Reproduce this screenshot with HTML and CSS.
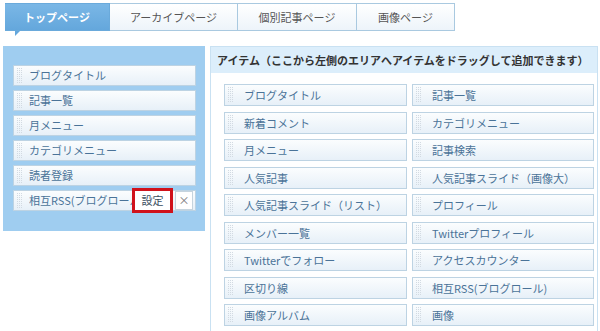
FILE: index.html
```html
<!DOCTYPE html>
<html lang="ja">
<head>
<meta charset="utf-8">
<link rel="stylesheet" href="styles.css">
</head>
<body>
<div class="tabs">
  <div class="tab active t1">トップページ<span class="tail"></span></div>
  <div class="tab t2">アーカイブページ</div>
  <div class="tab t3">個別記事ページ</div>
  <div class="tab t4">画像ページ</div>
</div>
<div class="main">
  <div class="left">
    <div class="item">ブログタイトル</div>
    <div class="item">記事一覧</div>
    <div class="item">月メニュー</div>
    <div class="item">カテゴリメニュー</div>
    <div class="item">読者登録</div>
    <div class="item last">
      <span class="clip">相互RSS(ブログロール)</span>
      <span class="setbox"><span class="setbtn">設定</span></span>
      <span class="close">×</span>
    </div>
  </div>
  <div class="right">
    <div class="head">アイテム（ここから左側のエリアへアイテムをドラッグして追加できます）</div>
    <div class="grid">
      <div class="item">ブログタイトル</div>
      <div class="item">記事一覧</div>
      <div class="item">新着コメント</div>
      <div class="item">カテゴリメニュー</div>
      <div class="item">月メニュー</div>
      <div class="item">記事検索</div>
      <div class="item">人気記事</div>
      <div class="item">人気記事スライド（画像大）</div>
      <div class="item">人気記事スライド（リスト）</div>
      <div class="item">プロフィール</div>
      <div class="item">メンバー一覧</div>
      <div class="item">Twitterプロフィール</div>
      <div class="item">Twitterでフォロー</div>
      <div class="item">アクセスカウンター</div>
      <div class="item">区切り線</div>
      <div class="item">相互RSS(ブログロール)</div>
      <div class="item">画像アルバム</div>
      <div class="item">画像</div>
    </div>
  </div>
</div>
</body>
</html>
```
FILE: styles.css
```css
* { box-sizing: border-box; }
html, body { margin: 0; padding: 0; background: #fff; overflow: hidden; }
body {
  font-family: "Noto Sans CJK JP", "Liberation Sans", sans-serif;
  font-size: 11px;
  color: #333;
  width: 600px;
  height: 331px;
}
.tabs {
  display: flex;
  margin: 3px 0 0 5px;
  height: 28px;
}
.tab {
  position: relative;
  height: 28px;
  line-height: 26px;
  text-align: center;
  color: #555;
  font-size: 11px;
  border: 1px solid #a9c9e0;
  border-left: none;
  background: linear-gradient(#ffffff, #edf4fa);
}
.t1 { width: 105px; }
.t2 { width: 128px; }
.t3 { width: 119px; }
.t4 { width: 98px; }
.tab.active {
  background: linear-gradient(#7ab7e6, #64a7dc);
  border-color: #6aaadb;
  color: #fff;
  font-weight: bold;
}
.tail {
  position: absolute;
  left: 10px;
  top: 27px;
  width: 0;
  height: 0;
  border-top: 5px solid #64a7dc;
  border-right: 5px solid transparent;
}
.main {
  display: flex;
  align-items: flex-start;
  margin-top: 15px;
}
.left {
  margin-left: 3px;
  width: 202px;
  height: 185px;
  background: #9fcdf0;
  padding: 19px 9px 0 10px;
  display: flex;
  flex-direction: column;
  gap: 4px;
}
.item {
  position: relative;
  height: 21px;
  line-height: 19px;
  border: 1px solid #bdd3e3;
  background: linear-gradient(#fbfdfe, #e7f0f8);
  color: #4a7398;
  padding-left: 15px;
  white-space: nowrap;
  overflow: hidden;
}
.item::before {
  content: "";
  position: absolute;
  left: 2px;
  top: 2px;
  bottom: 2px;
  width: 6px;
  background: conic-gradient(#d2dae2 25%, transparent 0) 0 0 / 2px 2px;
}
.left .item.last {
  display: flex;
  align-items: center;
  overflow: visible;
}
.clip {
  width: 105px;
  margin-right: -2px;
  overflow: hidden;
  white-space: nowrap;
}
.setbox {
  position: relative;
  width: 41px;
  height: 25px;
  border: 3px solid #d0121b;
  background: #fff;
  display: flex;
  align-items: center;
  justify-content: center;
  color: #3a4e60;
}
.setbtn { line-height: 17px; }
.close {
  margin-left: 2px;
  width: 18px;
  height: 19px;
  border: 1px solid #c6d4de;
  background: #fff;
  color: #777;
  font-size: 11px;
  line-height: 17px;
  text-align: center;
}
.right {
  margin-left: 5px;
  width: 388px;
  height: 290px;
  border: 1px solid #c9e1f2;
  border-bottom: none;
}
.head {
  height: 26px;
  line-height: 26px;
  background: #dceefb;
  padding-left: 6px;
  font-weight: bold;
  color: #333;
  font-size: 11px;
}
.grid {
  display: grid;
  grid-template-columns: 183px 182px;
  column-gap: 5px;
  row-gap: 5.5px;
  padding: 11px 0 0 13px;
}
.grid .item {
  height: 22px;
  line-height: 20px;
  padding-left: 19px;
}
```
